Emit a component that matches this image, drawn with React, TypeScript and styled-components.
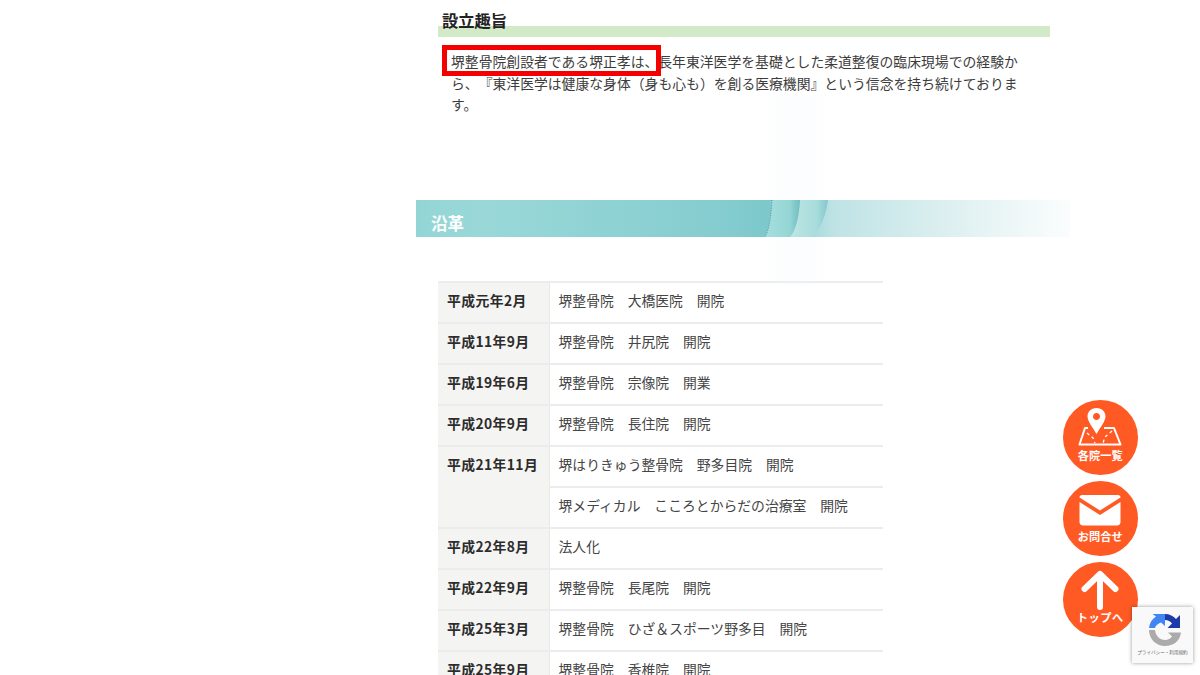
import React from "react";
import styled, { createGlobalStyle } from "styled-components";

const Global = createGlobalStyle`
  html, body { margin: 0; padding: 0; background: #fff; height: 100%; overflow: hidden; }
  body { font-family: "Noto Sans CJK JP", "Noto Sans", sans-serif; color: #3a3a3a; text-spacing-trim: space-all; }
`;

const Page = styled.div`
  position: relative;
  width: 1200px;
  height: 675px;
  overflow: hidden;
`;

const Main = styled.main`
  position: relative;
  width: 654px;
  margin-left: 416px;
  padding-top: 12px;
`;

const Watermark = styled.div`
  position: absolute;
  left: 345px;
  top: 95px;
  width: 70px;
  height: 190px;
  background: linear-gradient(90deg, rgba(240,245,250,0), rgba(240,245,250,.3) 50%, rgba(240,245,250,0));
  pointer-events: none;
`;

const Purpose = styled.section`
  position: relative;
  margin-left: 22px;
  width: 612px;
`;

const SubHeading = styled.h3`
  margin: 0;
  height: 25px;
  padding-left: 4px;
  font-size: 16.3px;
  line-height: 17px;
  font-weight: 700;
  color: #222;
  background: linear-gradient(#d3eac8, #d3eac8) left bottom / 100% 11px no-repeat;
`;

const Body = styled.p`
  position: relative;
  margin: 14px 0 0;
  padding: 0 30px 0 13px;
  font-size: 13.83px;
  line-height: 21.5px;
  color: #3c3c3c;
`;

const Highlight = styled.div`
  position: absolute;
  left: 4px;
  top: 33px;
  width: 209px;
  height: 21px;
  border: 5px solid #f40000;
  pointer-events: none;
`;

const Band = styled.h2`
  position: relative;
  margin: 84px 0 0;
  height: 37px;
  padding-left: 15px;
  font-size: 16.5px;
  line-height: 47px;
  font-weight: 700;
  color: #fff;
  overflow: hidden;
  background: linear-gradient(90deg, #93d5d5 0, #9ad8d8 10%, #86cdd0 45%, #7cc8cb 54%, #bfe3e5 64%, #e3f2f3 85%, #fbfdfd 100%);
`;

const BandArt = styled.svg`
  position: absolute;
  left: 340px;
  top: 0;
  width: 90px;
  height: 37px;
`;

const Table = styled.table`
  margin: 44px 0 0 22px;
  width: 445px;
  border-collapse: collapse;
  table-layout: fixed;
  font-size: 13.83px;
  line-height: 20px;
`;

const Th = styled.th`
  width: 111px;
  box-sizing: border-box;
  padding: 7px 0 12.1px 9px;
  background: #f4f4f3;
  border-top: 2px solid #ececec;
  border-bottom: 2px solid #ececec;
  text-align: left;
  vertical-align: top;
  font-weight: 700;
  letter-spacing: .4px;
  color: #2c2c2c;
  white-space: nowrap;
`;

const Td = styled.td`
  padding: 7px 0 12.1px 9px;
  border-top: 2px solid #ececec;
  border-bottom: 2px solid #ececec;
  border-left: 1px solid #e8e8e8;
  color: #454545;
  white-space: nowrap;
`;

const Floats = styled.nav`
  position: absolute;
  left: 1063px;
  top: 400px;
  display: flex;
  flex-direction: column;
  gap: 6.5px;
`;

const RoundLink = styled.a<{ $top: number }>`
  display: flex;
  flex-direction: column;
  align-items: center;
  box-sizing: border-box;
  width: 74.5px;
  height: 74.5px;
  border-radius: 50%;
  background: #ff5a24;
  color: #fff;
  font-size: 11.2px;
  line-height: 13px;
  font-weight: 700;
  padding-top: ${(p) => p.$top}px;
  white-space: nowrap;
`;

const Label = styled.span<{ $gap: number; $track?: number }>`
  margin-top: ${(p) => p.$gap}px;
  letter-spacing: ${(p) => p.$track ?? 0}px;
`;

const Badge = styled.div`
  position: absolute;
  left: 1132px;
  top: 607px;
  width: 61px;
  height: 56px;
  background: #f9f9f9;
  box-shadow: 0 0 4px rgba(0,0,0,.4);
  display: flex;
  flex-direction: column;
  align-items: center;
  padding-top: 6px;
  box-sizing: border-box;
`;

const BadgeLogo = styled.svg`
  margin-left: 4px;
`;

const BadgeText = styled.span`
  font-size: 4.6px;
  line-height: 8px;
  margin-top: 1px;
  color: #666;
  white-space: nowrap;
`;

const rows: [string, string][] = [
  ["平成元年2月", "堺整骨院　大橋医院　開院"],
  ["平成11年9月", "堺整骨院　井尻院　開院"],
  ["平成19年6月", "堺整骨院　宗像院　開業"],
  ["平成20年9月", "堺整骨院　長住院　開院"],
];
const rows2: [string, string][] = [
  ["平成22年8月", "法人化"],
  ["平成22年9月", "堺整骨院　長尾院　開院"],
  ["平成25年3月", "堺整骨院　ひざ＆スポーツ野多目　開院"],
  ["平成25年9月", "堺整骨院　香椎院　開院"],
];

export default function App() {
  return (
    <Page>
      <Global />
      <Main>
        <Watermark />
        <Purpose>
          <SubHeading>設立趣旨</SubHeading>
          <Body>
            堺整骨院創設者である堺正孝は、長年東洋医学を基礎とした柔道整復の臨床現場での経験から、『東洋医学は健康な身体（身も心も）を創る医療機関』という信念を持ち続けております。
          </Body>
          <Highlight />
        </Purpose>
        <Band>
          沿革
          <BandArt viewBox="0 0 90 37">
            <defs>
              <linearGradient id="bandA">
                <stop offset="0" stopColor="#a6dfdd" />
                <stop offset=".7" stopColor="#94d6d5" />
                <stop offset="1" stopColor="#72bcc0" />
              </linearGradient>
              <linearGradient id="bandB">
                <stop offset="0" stopColor="#bde6e4" />
                <stop offset=".7" stopColor="#a8dcdc" />
                <stop offset="1" stopColor="#84c8cb" />
              </linearGradient>
            </defs>
            <path d="M44 0H72C70 14 66 28 55 37H34C41 28 43 14 44 0Z" fill="url(#bandB)" />
            <path d="M16 0C15 14 14 28 9 37H34C41 28 43 14 44 0Z" fill="url(#bandA)" />
            <path d="M16 0C15 14 14 28 9 37" fill="none" stroke="#5a8fb0" strokeWidth="1" strokeDasharray="1 1.500" />
          </BandArt>
        </Band>
        <Table>
          <tbody>
            {rows.map(([a, b]) => (
              <tr key={a}><Th>{a}</Th><Td>{b}</Td></tr>
            ))}
            <tr><Th rowSpan={2}>平成21年11月</Th><Td>堺はりきゅう整骨院　野多目院　開院</Td></tr>
            <tr><Td>堺メディカル　こころとからだの治療室　開院</Td></tr>
            {rows2.map(([a, b]) => (
              <tr key={a}><Th>{a}</Th><Td>{b}</Td></tr>
            ))}
          </tbody>
        </Table>
      </Main>
      <Floats>
        <RoundLink $top={8}>
          <svg width="44" height="38" viewBox="0 0 44 38">
            <path fillRule="evenodd" fill="#fff" d="M18.500 0C13 0 9.500 4 9.500 8.500C9.500 13 15 20 18.500 26C22 20 27.500 13 27.500 8.500C27.500 4 24 0 18.500 0ZM18.500 5C20.500 5 22 6.500 22 8.500C22 10.500 20.500 12 18.500 12C16.500 12 15 10.500 15 8.500C15 6.500 16.500 5 18.500 5Z" />
            <path fill="none" stroke="#fff" strokeWidth="2" strokeLinejoin="round" d="M10 20H7L1.500 36.500H42.500L36 20H26" />
            <path fill="none" stroke="#fff" strokeWidth="1.300" strokeDasharray="3 3" d="M9 25L15 30L17 35M34 23L27 29L25 35" />
          </svg>
          <Label $gap={3}>各院一覧</Label>
        </RoundLink>
        <RoundLink $top={14}>
          <svg width="42" height="31" viewBox="0 0 42 31">
            <path fill="#fff" d="M3 0H39C40.500 0 41.500 1 41.500 2.500L21 15.500L.5 2.500C.5 1 1.500 0 3 0Z" />
            <path fill="#fff" d="M.5 7L21 20L41.500 7V27C41.500 29 40 30.500 38 30.500H4C2 30.500 .5 29 .5 27Z" />
          </svg>
          <Label $gap={4}>お問合せ</Label>
        </RoundLink>
        <RoundLink $top={8}>
          <svg width="38" height="40" viewBox="0 0 38 40">
            <path fill="none" stroke="#fff" strokeWidth="6" strokeLinecap="round" strokeLinejoin="round" d="M19 37V4M3.500 19L19 4L34.500 19" />
          </svg>
          <Label $gap={1} $track={0.6}>トップへ</Label>
        </RoundLink>
      </Floats>
      <Badge>
        <BadgeLogo width="34" height="34" viewBox="0 0 34 34">
          <path fill="#1c3aa9" d="M17 1C21.500 1 25.500 3 28 6L32 2V15H19.500L24 10.500C22.500 8.500 20 7 17 7Z" />
          <path fill="#4285f4" d="M1 15C1.500 10 4 6 8 3.500L4.500 1H17V13L13 9.500C10 10.500 7.500 12.500 7 15Z" />
          <path fill="#ababab" d="M1 17H7C7.500 22.500 11.500 27 17 27C20 27 22.500 25.500 24 23.500L20 19.500H33C32 28 25.500 33 17 33C8 33 1 26 1 17Z" />
        </BadgeLogo>
        <BadgeText>プライバシー・利用規約</BadgeText>
      </Badge>
    </Page>
  );
}
